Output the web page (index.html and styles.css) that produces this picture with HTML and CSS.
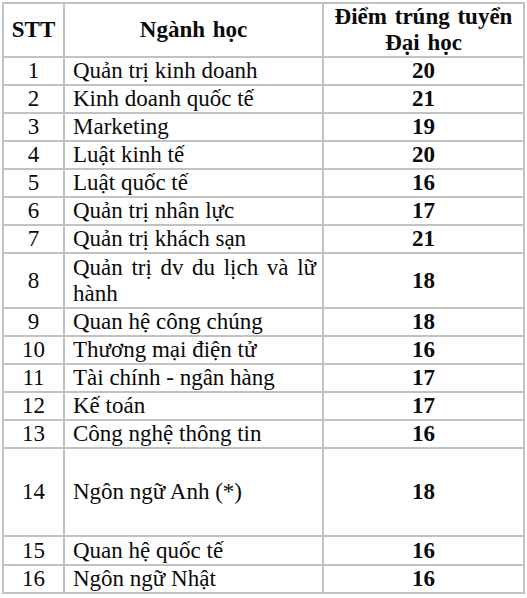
FILE: index.html
```html
<!DOCTYPE html>
<html lang="vi">
<head>
<meta charset="utf-8">
<title>Điểm trúng tuyển</title>
<link rel="stylesheet" href="styles.css">
</head>
<body>
<table class="scores">
  <colgroup>
    <col class="c-stt">
    <col class="c-name">
    <col class="c-score">
  </colgroup>
  <thead>
    <tr class="head">
      <th>STT</th>
      <th class="h-name">Ngành học</th>
      <th>Điểm trúng tuyển<br>Đại học</th>
    </tr>
  </thead>
  <tbody>
    <tr><td class="stt">1</td><td class="name">Quản trị kinh doanh</td><td class="score">20</td></tr>
    <tr><td class="stt">2</td><td class="name">Kinh doanh quốc tế</td><td class="score">21</td></tr>
    <tr><td class="stt">3</td><td class="name">Marketing</td><td class="score">19</td></tr>
    <tr><td class="stt">4</td><td class="name">Luật kinh tế</td><td class="score">20</td></tr>
    <tr><td class="stt">5</td><td class="name">Luật quốc tế</td><td class="score">16</td></tr>
    <tr><td class="stt">6</td><td class="name">Quản trị nhân lực</td><td class="score">17</td></tr>
    <tr><td class="stt">7</td><td class="name">Quản trị khách sạn</td><td class="score">21</td></tr>
    <tr class="double"><td class="stt">8</td><td class="name justify">Quản trị dv du lịch và lữ hành</td><td class="score">18</td></tr>
    <tr><td class="stt">9</td><td class="name">Quan hệ công chúng</td><td class="score">18</td></tr>
    <tr><td class="stt">10</td><td class="name">Thương mại điện tử</td><td class="score">16</td></tr>
    <tr><td class="stt">11</td><td class="name">Tài chính - ngân hàng</td><td class="score">17</td></tr>
    <tr><td class="stt">12</td><td class="name">Kế toán</td><td class="score">17</td></tr>
    <tr><td class="stt">13</td><td class="name">Công nghệ thông tin</td><td class="score">16</td></tr>
    <tr class="tall"><td class="stt">14</td><td class="name">Ngôn ngữ Anh (*)</td><td class="score">18</td></tr>
    <tr class="r15"><td class="stt">15</td><td class="name">Quan hệ quốc tế</td><td class="score">16</td></tr>
    <tr><td class="stt">16</td><td class="name">Ngôn ngữ Nhật</td><td class="score">16</td></tr>
  </tbody>
</table>
</body>
</html>
```

FILE: styles.css
```css
html, body {
  margin: 0;
  padding: 0;
  background: #ffffff;
}

body {
  padding: 2px 0 0 2px;
  font-family: "Liberation Serif", "DejaVu Serif", "Times New Roman", serif;
  font-size: 23px;
  color: #0a0a0a;
}

.scores {
  border-collapse: collapse;
  table-layout: fixed;
  width: 521px;
}

.c-stt { width: 61px; }
.c-name { width: 259px; }
.c-score { width: 201px; }

.scores th,
.scores td {
  border: 2px solid #c2c2c2;
  padding: 0;
  height: 26px;
  line-height: 26px;
  vertical-align: middle;
}

.scores th {
  font-weight: bold;
  text-align: center;
  word-spacing: 2px;
}

.head th {
  height: 52px;
}

.h-name {
  padding-right: 6px;
}

.stt {
  text-align: center;
}

.name {
  text-align: left;
  padding: 0 6px 0 8px !important;
}

.justify {
  text-align: justify;
  text-align-last: left;
}

.score {
  text-align: center;
  font-weight: bold;
}

.double td {
  height: 53px;
}

.tall td {
  height: 86px;
}

.r15 td {
  height: 27px;
}
```
